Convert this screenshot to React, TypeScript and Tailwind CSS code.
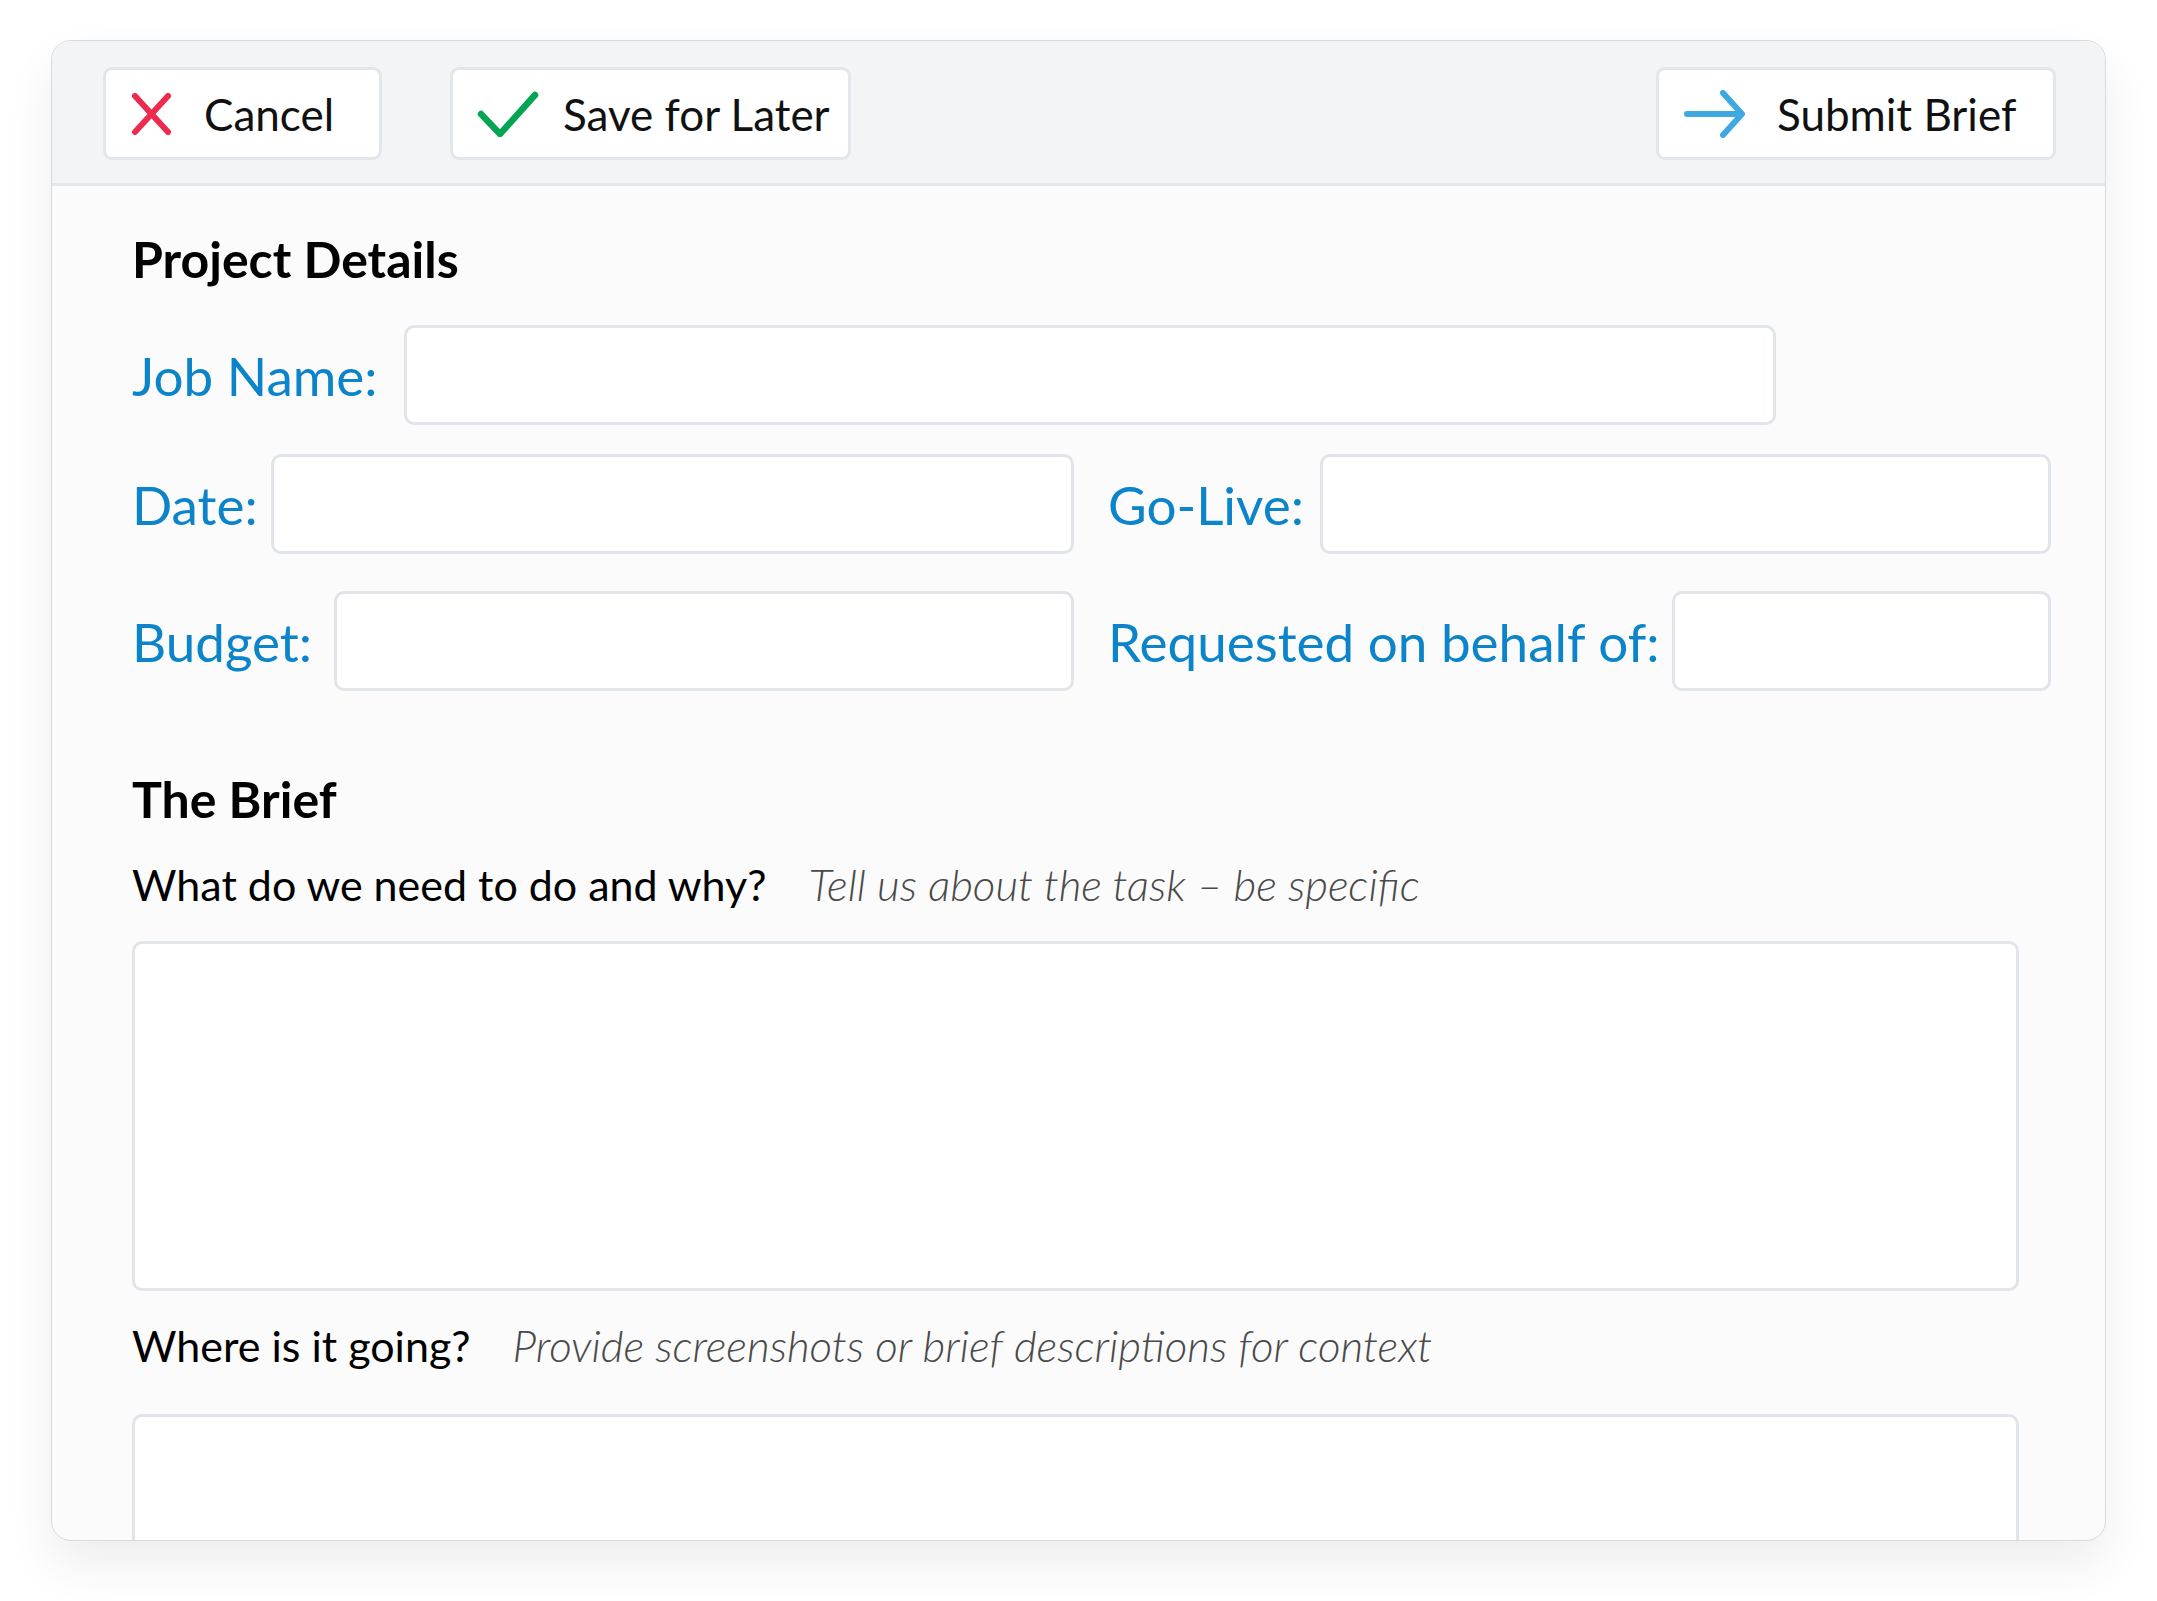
import React from "react";

const font = { fontFamily: "Lato, 'Noto Sans', Arial, sans-serif" };

const XIcon = () => (
    <svg width="44" height="44" viewBox="0 0 44 44" fill="none">
        <path d="M5 4 L38 40 M38 4 L5 40" stroke="#ec2c4f" strokeWidth="6" strokeLinecap="round" />
    </svg>
);

const CheckIcon = () => (
    <svg width="62" height="46" viewBox="0 0 62 46" fill="none">
        <path d="M4 23 L23 43 L58 4" stroke="#03a552" strokeWidth="6.5" strokeLinecap="round" strokeLinejoin="round" />
    </svg>
);

const ArrowIcon = () => (
    <svg width="64" height="48" viewBox="0 0 64 48" fill="none">
        <path d="M4 24 H58 M40 3 L59 24 L40 45" stroke="#3ea9e0" strokeWidth="6" strokeLinecap="round" strokeLinejoin="round" />
    </svg>
);

interface ButtonProps {
    icon: React.ReactNode;
    label: string;
    width: string;
    gap: string;
}

const HeaderButton: React.FC<ButtonProps> = ({ icon, label, width, gap }) => (
    <button
        className={`flex items-center h-[93px] bg-white border-[3px] border-[#e3e6eb] rounded-[9px] pl-[24px] text-[44px] text-[#111] ${width} ${gap}`}
    >
        {icon}
        <span className="leading-none">{label}</span>
    </button>
);

const Field: React.FC<{ label: string; labelWidth: string; inputWidth: string }> = ({ label, labelWidth, inputWidth }) => (
    <div className="flex items-center">
        <div className={`text-[53px] leading-none text-[#0b84c9] whitespace-nowrap ${labelWidth}`}>{label}</div>
        <div className={`h-[100px] bg-white border-[3px] border-[#e1e4e9] rounded-[10px] ${inputWidth}`} />
    </div>
);

export default function App() {
    return (
        <div className="min-h-[1601px] bg-white pt-[40px] pl-[51px]" style={font}>
            <div className="w-[2055px] h-[1501px] overflow-hidden rounded-[20px] border border-[#d9d9d9] bg-[#fbfbfb] shadow-[0_24px_48px_rgba(0,0,0,0.07)]">
                {/* toolbar */}
                <div className="h-[145px] bg-[#f3f4f6] border-b-[3px] border-[#e3e6ea] flex items-start pt-[26px] pl-[51px] pr-[49px]">
                    <HeaderButton icon={<XIcon />} label="Cancel" width="w-[279px]" gap="gap-[30px]" />
                    <div className="ml-[68px]">
                        <HeaderButton icon={<CheckIcon />} label="Save for Later" width="w-[401px]" gap="gap-[24px]" />
                    </div>
                    <div className="ml-auto">
                        <HeaderButton icon={<ArrowIcon />} label="Submit Brief" width="w-[400px]" gap="gap-[30px]" />
                    </div>
                </div>

                <div className="pl-[80px] pr-[54px]">
                    <h2 className="mt-[48px] text-[50px] font-bold leading-none text-black">Project Details</h2>

                    <div className="mt-[41px]">
                        <Field label="Job Name:" labelWidth="w-[272px]" inputWidth="w-[1372px]" />
                    </div>

                    <div className="mt-[29px] flex justify-between">
                        <Field label="Date:" labelWidth="w-[139px]" inputWidth="w-[803px]" />
                        <Field label="Go-Live:" labelWidth="w-[212px]" inputWidth="w-[731px]" />
                    </div>

                    <div className="mt-[37px] flex justify-between">
                        <Field label="Budget:" labelWidth="w-[202px]" inputWidth="w-[740px]" />
                        <Field label="Requested on behalf of:" labelWidth="w-[564px]" inputWidth="w-[379px]" />
                    </div>

                    <h2 className="mt-[83px] text-[50px] font-bold leading-none text-black">The Brief</h2>

                    <div className="mt-[38px] flex items-baseline leading-none">
                        <span className="text-[43px] text-black">What do we need to do and why?</span>
                        <span className="ml-[42px] text-[44px] italic font-light text-[#4a4a4a]">Tell us about the task – be specific</span>
                    </div>

                    <div className="mt-[35px] w-[1887px] h-[350px] bg-white border-[3px] border-[#e1e4e9] rounded-[10px]" />

                    <div className="mt-[32px] flex items-baseline leading-none">
                        <span className="text-[43px] text-black">Where is it going?</span>
                        <span className="ml-[42px] text-[44px] italic font-light text-[#4a4a4a]">Provide screenshots or brief descriptions for context</span>
                    </div>

                    <div className="mt-[47px] w-[1887px] h-[300px] bg-white border-[3px] border-[#e1e4e9] rounded-[10px]" />
                </div>
            </div>
        </div>
    );
}
